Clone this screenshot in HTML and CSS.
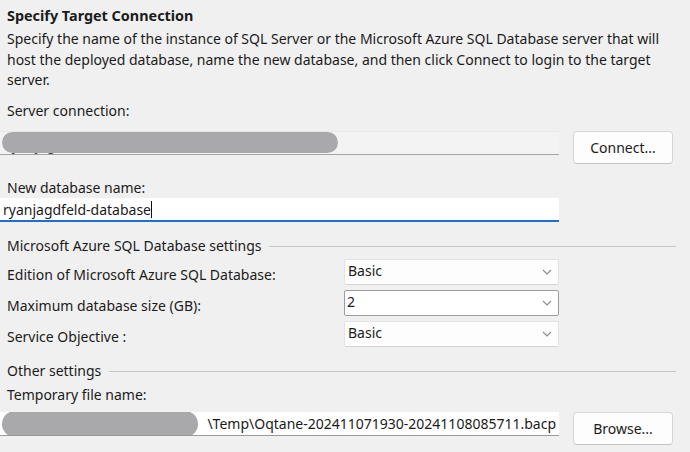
FILE: index.html
```html
<!DOCTYPE html>
<html>
<head>
<meta charset="utf-8">
<link rel="stylesheet" href="styles.css">
</head>
<body>
<div class="page">
  <h1 class="title">Specify Target Connection</h1>
  <p class="desc">Specify the name of the instance of SQL Server or the Microsoft Azure SQL Database server that will host the deployed database, name the new database, and then click Connect to login to the target server.</p>

  <div class="label lbl-server">Server connection:</div>
  <div class="row row-server">
    <div class="field field-disabled">
      <span class="hidden-text">ryanjagdfeld</span>
      <span class="blob blob-server"></span>
    </div>
    <button class="btn">Connect...</button>
  </div>

  <div class="label lbl-name">New database name:</div>
  <div class="field field-focus">ryanjagdfeld-database<span class="caret"></span></div>

  <div class="group group-azure"><span class="group-text">Microsoft Azure SQL Database settings</span><span class="group-line"></span></div>

  <div class="settings">
    <div class="set-label">Edition of Microsoft Azure SQL Database:</div>
    <div class="combo"><span>Basic</span><svg class="chev" width="10" height="6" viewBox="0 0 10 6"><polyline points="1,1 5,5 9,1" fill="none" stroke="#8a8a8a" stroke-width="1.1"/></svg></div>
    <div class="set-label">Maximum database size (GB):</div>
    <div class="combo combo-edit"><span>2</span><svg class="chev" width="10" height="6" viewBox="0 0 10 6"><polyline points="1,1 5,5 9,1" fill="none" stroke="#8a8a8a" stroke-width="1.1"/></svg></div>
    <div class="set-label">Service Objective :</div>
    <div class="combo"><span>Basic</span><svg class="chev" width="10" height="6" viewBox="0 0 10 6"><polyline points="1,1 5,5 9,1" fill="none" stroke="#8a8a8a" stroke-width="1.1"/></svg></div>
  </div>

  <div class="group group-other"><span class="group-text">Other settings</span><span class="group-line"></span></div>

  <div class="label lbl-temp">Temporary file name:</div>
  <div class="row row-file">
    <div class="field field-file">
      <span class="file-text">\Temp\Oqtane-202411071930-20241108085711.bacp</span>
      <span class="blob blob-file"></span>
    </div>
    <button class="btn">Browse...</button>
  </div>
</div>
</body>
</html>
```

FILE: styles.css
```css
html, body {
  margin: 0;
  padding: 0;
  background: #f0f0f0;
}
.page {
  width: 690px;
  height: 452px;
  overflow: hidden;
  background: #f0f0f0;
  font-family: "Noto Sans", "Open Sans", sans-serif;
  font-size: 14px;
  color: #1b1b1b;
}
.title {
  margin: 0 0 0 7px;
  padding-top: 6px;
  font-size: 14.4px;
  font-weight: bold;
  line-height: 20px;
}
.desc {
  margin: 3px 0 0 7px;
  width: 676px;
  line-height: 20.5px;
}
.label {
  margin-left: 7px;
  line-height: 20px;
}
.lbl-server { margin-top: 10px; }
.lbl-name { margin-top: 14px; }
.lbl-temp { margin-top: 4px; }

.row {
  display: flex;
  align-items: flex-start;
}
.row-server { margin-top: 10px; }
.row-file { margin-top: 7px; }

.field {
  position: relative;
  box-sizing: border-box;
  width: 559px;
  height: 24px;
  padding: 2px 4px 0;
  line-height: 20px;
  overflow: hidden;
  white-space: nowrap;
}
.field-disabled {
  background: #f3f3f3;
  border-top: 1px solid #e8e8e8;
  border-bottom: 1px solid #a5a5a5;
}
.hidden-text {
  color: #444;
  position: relative;
  top: 1px;
  margin-left: 2px;
}
.field-focus {
  background: #ffffff;
  border-bottom: 2px solid #1f6fd0;
  padding-left: 3px;
}
.caret {
  display: inline-block;
  width: 1px;
  height: 17px;
  background: #111;
  vertical-align: -3px;
}
.field-file {
  background: #ffffff;
  border-bottom: 1px solid #9a9a9a;
  text-align: right;
  padding-right: 3px;
}
.blob {
  position: absolute;
  background: #a9a9ab;
  border-radius: 12px;
}
.blob-server {
  left: 2px;
  top: 0;
  width: 336px;
  height: 21px;
  border-radius: 11px;
}
.blob-file {
  left: 2px;
  top: -1px;
  width: 196px;
  height: 26px;
  border-radius: 13px;
}

.btn {
  margin-left: 14px;
  box-sizing: border-box;
  width: 100px;
  height: 33px;
  background: #fdfdfd;
  border: 1px solid #d6d6d6;
  border-bottom-color: #c4c4c4;
  border-radius: 4px;
  font-family: inherit;
  font-size: 14px;
  color: #1b1b1b;
  padding: 0;
}

.group {
  display: flex;
  align-items: center;
  margin-left: 7px;
  width: 669px;
  line-height: 20px;
}
.group-azure { margin-top: 14px; }
.group-other { margin-top: 14px; }
.group-text { white-space: nowrap; }
.group-line {
  flex: 1;
  height: 1px;
  background: #c6c6c6;
  margin-left: 8px;
  margin-top: 1px;
}

.settings {
  margin-top: 3px;
  display: grid;
  grid-template-columns: 337px 215px;
  row-gap: 5px;
  margin-left: 7px;
}
.set-label {
  line-height: 20px;
  padding-top: 6px;
}
.combo {
  box-sizing: border-box;
  height: 26px;
  display: flex;
  align-items: center;
  justify-content: space-between;
  padding: 0 6px 0 3px;
  background: #fdfdfd;
  border: 1px solid #e3e3e3;
  border-bottom-color: #d4d4d4;
  border-radius: 2px;
  line-height: 20px;
}
.combo span { position: relative; top: -1px; }
.combo-edit {
  border-color: #9d9d9d;
  background: #ffffff;
  padding-left: 2px;
}
.chev { display: block; }
```
